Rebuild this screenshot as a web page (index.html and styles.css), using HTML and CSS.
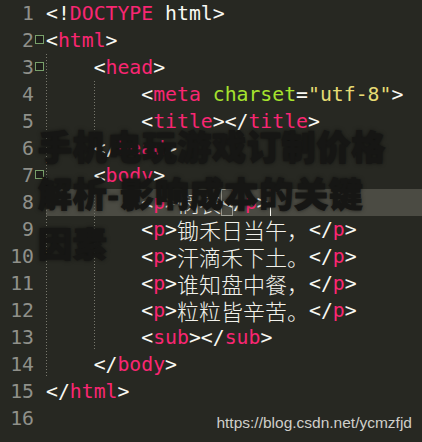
FILE: index.html
```html
<!DOCTYPE html>
<html lang="zh">
<head>
<meta charset="utf-8">
<title>code</title>
<link rel="stylesheet" href="styles.css">
</head>
<body>
<div class="editor">
  <div class="row"><span class="num">1</span><span class="fold"></span><span class="code"><span class="w">&lt;!</span><span class="t">DOCTYPE</span><span class="w"> html&gt;</span></span></div>
  <div class="row"><span class="num">2</span><span class="fold"><i class="mk"></i></span><span class="code"><span class="w">&lt;</span><span class="t">html</span><span class="w">&gt;</span></span></div>
  <div class="row"><span class="num">3</span><span class="fold"><i class="mk"></i></span><span class="code"><span class="ind g"></span><span class="w">&lt;</span><span class="t">head</span><span class="w">&gt;</span></span></div>
  <div class="row"><span class="num">4</span><span class="fold"></span><span class="code"><span class="ind g"></span><span class="ind g"></span><span class="w">&lt;</span><span class="t">meta</span><span class="w"> </span><span class="a">charset</span><span class="w">=</span><span class="s">"utf-8"</span><span class="w">&gt;</span></span></div>
  <div class="row"><span class="num">5</span><span class="fold"></span><span class="code"><span class="ind g"></span><span class="ind g"></span><span class="w">&lt;</span><span class="t">title</span><span class="w">&gt;&lt;/</span><span class="t">title</span><span class="w">&gt;</span></span></div>
  <div class="row"><span class="num">6</span><span class="fold"></span><span class="code"><span class="ind g"></span><span class="w">&lt;/</span><span class="t">head</span><span class="w">&gt;</span></span></div>
  <div class="row"><span class="num">7</span><span class="fold"><i class="mk"></i></span><span class="code"><span class="ind g"></span><span class="w">&lt;</span><span class="t">body</span><span class="w">&gt;</span></span></div>
  <div class="row cur"><span class="num">8</span><span class="fold"></span><span class="code"><span class="ind g"></span><span class="ind g"></span><span class="w">&lt;</span><span class="t">p</span><span class="w">&gt;</span><span class="cn">悯农</span><span class="w box">&lt;</span><span class="w">/</span><span class="t">p</span><span class="w">&gt;</span><span class="caret"></span></span></div>
  <div class="row"><span class="num">9</span><span class="fold"></span><span class="code"><span class="ind g"></span><span class="ind g"></span><span class="w">&lt;</span><span class="t">p</span><span class="w">&gt;</span><span class="cn">锄禾日当午，</span><span class="w">&lt;/</span><span class="t">p</span><span class="w">&gt;</span></span></div>
  <div class="row"><span class="num">10</span><span class="fold"></span><span class="code"><span class="ind g"></span><span class="ind g"></span><span class="w">&lt;</span><span class="t">p</span><span class="w">&gt;</span><span class="cn">汗滴禾下土。</span><span class="w">&lt;/</span><span class="t">p</span><span class="w">&gt;</span></span></div>
  <div class="row"><span class="num">11</span><span class="fold"></span><span class="code"><span class="ind g"></span><span class="ind g"></span><span class="w">&lt;</span><span class="t">p</span><span class="w">&gt;</span><span class="cn">谁知盘中餐，</span><span class="w">&lt;/</span><span class="t">p</span><span class="w">&gt;</span></span></div>
  <div class="row"><span class="num">12</span><span class="fold"></span><span class="code"><span class="ind g"></span><span class="ind g"></span><span class="w">&lt;</span><span class="t">p</span><span class="w">&gt;</span><span class="cn">粒粒皆辛苦。</span><span class="w">&lt;/</span><span class="t">p</span><span class="w">&gt;</span></span></div>
  <div class="row"><span class="num">13</span><span class="fold"></span><span class="code"><span class="ind g"></span><span class="ind g"></span><span class="w">&lt;</span><span class="t">sub</span><span class="w">&gt;&lt;/</span><span class="t">sub</span><span class="w">&gt;</span></span></div>
  <div class="row"><span class="num">14</span><span class="fold"></span><span class="code"><span class="ind g"></span><span class="w">&lt;/</span><span class="t">body</span><span class="w">&gt;</span></span></div>
  <div class="row"><span class="num">15</span><span class="fold"></span><span class="code"><span class="w">&lt;/</span><span class="t">html</span><span class="w">&gt;</span></span></div>
  <div class="row"><span class="num">16</span><span class="fold"></span><span class="code"></span></div>
</div>
<h1 class="title">手机电玩游戏订制价格<br>解析<span class="hy">-</span>影响成本的关键<br>因素</h1>
<div class="mark">https://blog.csdn.net/ycmzfjd</div>
</body>
</html>
```
FILE: styles.css
```css
html, body {
  margin: 0;
  padding: 0;
  background: #272822;
}
body {
  width: 422px;
  height: 442px;
  overflow: hidden;
  position: relative;
}
.editor {
  display: flex;
  flex-direction: column;
  font-family: "DejaVu Sans Mono", "Liberation Mono", monospace;
  font-size: 19.8px;
  color: #f8f8f2;
}
.row {
  display: flex;
  height: 27px;
  line-height: 27px;
  white-space: pre;
}
.num {
  width: 34px;
  text-align: right;
  color: #8f908a;
  flex: none;
}
.fold {
  width: 12px;
  flex: none;
  position: relative;
}
.mk {
  position: absolute;
  left: 1px;
  top: 8px;
  width: 7px;
  height: 7px;
  border: 1px solid #78a06a;
  background: #1e1f1a;
}
.code {
  flex: 1;
  display: flex;
  align-items: stretch;
}
.cur .code {
  background: #4b4b43;
}
.ind {
  width: 4ch;
  flex: none;
}
.g {
  background: repeating-linear-gradient(to bottom, #77776c 0 1px, transparent 1px 3px) left top / 1px 100% no-repeat;
}
.w { color: #f8f8f2; }
.t { color: #f92672; }
.a { color: #a6e22e; }
.s { color: #e6db74; }
.cn {
  font-family: "Noto Sans CJK SC", sans-serif;
  font-size: 22px;
  color: #f2f2ec;
  font-weight: 300;
}
.box {
  box-shadow: inset 0 0 0 1px #9a9a90;
}
.caret {
  width: 1.5px;
  background: #f8f8f0;
  margin-left: 1px;
}
.title {
  position: absolute;
  left: 38px;
  top: 122px;
  margin: 0;
  font-family: "Noto Sans CJK SC", sans-serif;
  font-weight: 900;
  font-size: 34px;
  line-height: 47px;
  letter-spacing: 0.8px;
  color: #161614;
  -webkit-text-stroke: 1px #161614;
  text-shadow: 0 0 4px rgba(0, 0, 0, 0.7);
}
.hy {
  font-family: "Liberation Sans", Arial, sans-serif;
  letter-spacing: 0;
  margin-right: 1px;
}
.mark {
  position: absolute;
  right: 10px;
  bottom: 10px;
  font-family: "Liberation Sans", Arial, sans-serif;
  font-size: 15.5px;
  color: #cfcfca;
}
```
